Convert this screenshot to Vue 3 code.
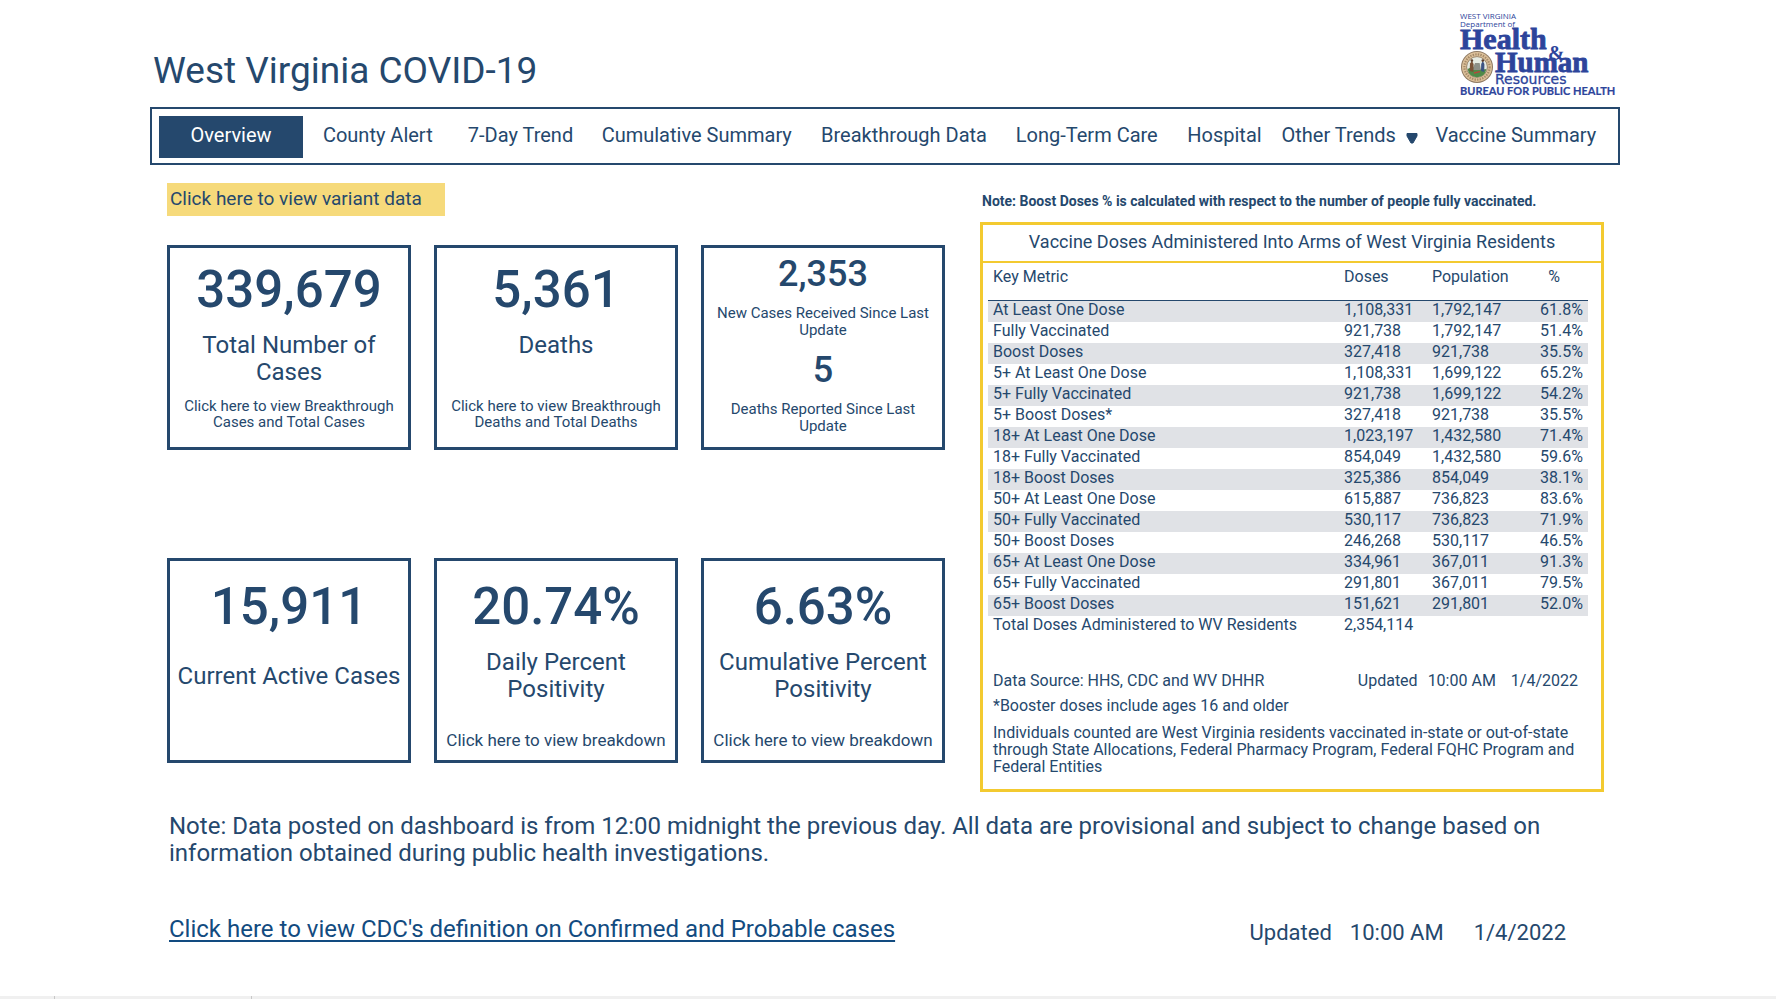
<script setup>
import { ref } from 'vue';

// --- Navigation ---
const activeTab = ref('Overview');
const tabs = [
  { name: 'Overview' },
  { name: 'County Alert' },
  { name: '7-Day Trend' },
  { name: 'Cumulative Summary' },
  { name: 'Breakthrough Data' },
  { name: 'Long-Term Care' },
  { name: 'Hospital' },
  { name: 'Other Trends', menu: true },
  { name: 'Vaccine Summary' },
];

// --- Figures ---
const caseCards = [
  { value: '339,679', label: 'Total Number of Cases', link: 'Click here to view Breakthrough Cases and Total Cases' },
  { value: '5,361', label: 'Deaths', link: 'Click here to view Breakthrough Deaths and Total Deaths' },
];

const updateStats = [
  { value: '2,353', label: 'New Cases Received Since Last Update' },
  { value: '5', label: 'Deaths Reported Since Last Update' },
];

const rateCards = [
  { value: '15,911', label: 'Current Active Cases' },
  { value: '20.74%', label: 'Daily Percent Positivity', link: 'Click here to view breakdown' },
  { value: '6.63%', label: 'Cumulative Percent Positivity', link: 'Click here to view breakdown' },
];

const vaccineRows = [
  ['At Least One Dose', '1,108,331', '1,792,147', '61.8%'],
  ['Fully Vaccinated', '921,738', '1,792,147', '51.4%'],
  ['Boost Doses', '327,418', '921,738', '35.5%'],
  ['5+ At Least One Dose', '1,108,331', '1,699,122', '65.2%'],
  ['5+ Fully Vaccinated', '921,738', '1,699,122', '54.2%'],
  ['5+ Boost Doses*', '327,418', '921,738', '35.5%'],
  ['18+ At Least One Dose', '1,023,197', '1,432,580', '71.4%'],
  ['18+ Fully Vaccinated', '854,049', '1,432,580', '59.6%'],
  ['18+ Boost Doses', '325,386', '854,049', '38.1%'],
  ['50+ At Least One Dose', '615,887', '736,823', '83.6%'],
  ['50+ Fully Vaccinated', '530,117', '736,823', '71.9%'],
  ['50+ Boost Doses', '246,268', '530,117', '46.5%'],
  ['65+ At Least One Dose', '334,961', '367,011', '91.3%'],
  ['65+ Fully Vaccinated', '291,801', '367,011', '79.5%'],
  ['65+ Boost Doses', '151,621', '291,801', '52.0%'],
  ['Total Doses Administered to WV Residents', '2,354,114', '', ''],
];
</script>

<template>
  <div class="dashboard">
    <header class="page-header">
      <h1 class="page-title">West Virginia COVID-19</h1>
      <svg class="logo" viewBox="0 0 158 88" role="img" aria-label="West Virginia Department of Health and Human Resources">
        <g fill="#2d449b">
          <text x="2" y="8" class="logo-small">WEST VIRGINIA</text>
          <text x="2" y="16" class="logo-small">Department of</text>
          <text x="2" y="38" class="logo-serif health">Health</text>
          <text x="90" y="49" class="logo-amp">&amp;</text>
          <text x="37" y="61" class="logo-serif">Human</text>
          <text x="37" y="73" class="logo-wide">Resources</text>
          <text x="2" y="84" class="logo-bureau">BUREAU FOR PUBLIC HEALTH</text>
        </g>
        <!-- state seal -->
        <circle cx="19" cy="56" r="16" fill="#8f7a62" />
        <circle cx="19" cy="56" r="15" fill="#dcc09a" />
        <circle cx="19" cy="56" r="12.6" fill="none" stroke="#a58a68" stroke-width="2.2" stroke-dasharray="1.4 1.2" />
        <circle cx="19" cy="56" r="10.4" fill="#e6ebe2" stroke="#8a7458" stroke-width="0.8" />
        <path d="M9.6 58 Q14 55 19 57 T28.4 58 Q27 66 19 66.2 Q11 66 9.6 58Z" fill="#4f8a48" />
        <path d="M15.4 56 L17 52 L21.6 52 L23 59 L15 59Z" fill="#8d8f86" />
        <path d="M11.6 60 L12 52.5 L14 50 L15.6 53 L15.4 61Z" fill="#7a5236" />
        <path d="M23 60 L23.2 53 L24.8 50 L26.4 53 L26.2 61Z" fill="#3d5482" />
        <circle cx="13.9" cy="49.6" r="1.3" fill="#5b3d2b" />
        <circle cx="24.8" cy="49.6" r="1.3" fill="#5b3d2b" />
        <path d="M16 62 L22 60.6" stroke="#b5493a" stroke-width="1.4" />
      </svg>
    </header>

    <nav class="tabs">
      <button
        v-for="tab in tabs"
        :key="tab.name"
        type="button"
        class="tab"
        :class="{ active: tab.name === activeTab }"
        @click="activeTab = tab.name"
      >
        {{ tab.name }}
        <svg v-if="tab.menu" class="caret" viewBox="0 0 12 12" aria-hidden="true">
          <path d="M1 1.5 H11 V4 L7 11 H5 L1 4Z" fill="currentColor" stroke="currentColor" stroke-linejoin="round" />
        </svg>
      </button>
    </nav>

    <main class="content">
      <section class="figures">
        <a class="variant-link" href="#">Click here to view variant data</a>

        <div class="card-grid">
          <article v-for="card in caseCards" :key="card.label" class="card case-card">
            <p class="card-value">{{ card.value }}</p>
            <h2 class="card-label">{{ card.label }}</h2>
            <a class="card-link" href="#">{{ card.link }}</a>
          </article>

          <article class="card update-card">
            <div v-for="stat in updateStats" :key="stat.label" class="update-stat">
              <p class="update-value">{{ stat.value }}</p>
              <h2 class="update-label">{{ stat.label }}</h2>
            </div>
          </article>

          <article v-for="card in rateCards" :key="card.label" class="card rate-card">
            <p class="card-value">{{ card.value }}</p>
            <h2 class="card-label"><span>{{ card.label }}</span></h2>
            <a v-if="card.link" class="card-link" href="#">{{ card.link }}</a>
          </article>
        </div>
      </section>

      <section class="vaccines">
        <p class="boost-note">Note: Boost Doses % is calculated with respect to the number of people fully vaccinated.</p>

        <div class="panel">
          <h2 class="panel-title">Vaccine Doses Administered Into Arms of West Virginia Residents</h2>

          <table class="vaccine-table">
            <thead>
              <tr>
                <th class="col-metric">Key Metric</th>
                <th class="col-doses">Doses</th>
                <th class="col-population">Population</th>
                <th class="col-percent">%</th>
              </tr>
            </thead>
            <tbody>
              <tr v-for="row in vaccineRows" :key="row[0]">
                <td v-for="(cell, i) in row" :key="i">{{ cell }}</td>
              </tr>
            </tbody>
          </table>

          <div class="panel-source">
            <span class="source">Data Source: HHS, CDC and WV DHHR</span>
            <span>Updated</span>
            <span>10:00 AM</span>
            <span class="source-date">1/4/2022</span>
          </div>
          <p class="panel-note">*Booster doses include ages 16 and older</p>
          <p class="panel-note">
            Individuals counted are West Virginia residents vaccinated in-state or out-of-state through State
            Allocations, Federal Pharmacy Program, Federal FQHC Program and Federal Entities
          </p>
        </div>
      </section>
    </main>

    <footer class="page-footer">
      <p class="data-note">
        Note: Data posted on dashboard is from 12:00 midnight the previous day. All data are provisional and subject to
        change based on information obtained during public health investigations.
      </p>
      <div class="footer-row">
        <a class="cdc-link" href="#">Click here to view CDC's definition on Confirmed and Probable cases</a>
        <div class="updated">
          <span>Updated</span>
          <span>10:00 AM</span>
          <span class="updated-date">1/4/2022</span>
        </div>
      </div>
    </footer>

    <div class="bottom-strip">
      <span class="strip-first"></span>
      <span class="strip-second"></span>
    </div>
  </div>
</template>

<style>
body {
  margin: 0;
  background: #fff;
}
</style>

<style scoped>
.dashboard {
  min-height: 100vh;
  box-sizing: border-box;
  display: flex;
  flex-direction: column;
  color: #25486d;
  font-family: Roboto, 'Liberation Sans', sans-serif;
}

h1, h2, p { margin: 0; font-weight: 400; }
a { color: inherit; text-decoration: none; }

/* Header */
.page-header {
  display: flex;
  justify-content: space-between;
  align-items: flex-start;
  padding: 11px 160px 0 153px;
  height: 96px;
}

.page-title {
  padding-top: 36px;
  font-size: 37px;
  line-height: 48px;
}

.logo { width: 158px; height: 88px; overflow: visible; }
.logo-small { font: 8px 'Open Sans', sans-serif; }
.logo-serif { font: bold 29px 'Liberation Serif', serif; stroke: #2d449b; stroke-width: 0.8px; }
.logo-serif.health { font-size: 30px; }
.logo-amp { font: bold 20px 'Liberation Serif', serif; }
.logo-wide { font: 14px 'DejaVu Sans', sans-serif; stroke: #2d449b; stroke-width: 0.3px; }
.logo-bureau { font: bold 11px Lato, sans-serif; stroke: #2d449b; stroke-width: 0.2px; }

/* Tabs */
.tabs {
  display: grid;
  grid-template-columns: 144fr 149fr 136fr 216fr 198fr 167fr 108fr 142fr 190fr;
  margin: 0 156px 0 150px;
  padding: 7px 7px 5px;
  border: 2px solid #25486d;
}

.tab {
  display: flex;
  align-items: center;
  justify-content: center;
  gap: 10px;
  height: 42px;
  padding: 0 0 4px;
  border: 0;
  background: none;
  color: inherit;
  font: 20px Roboto, 'Liberation Sans', sans-serif;
  white-space: nowrap;
  cursor: pointer;
}

.tab.active { background: #25486d; color: #fff; }
.caret { width: 12px; height: 12px; margin-top: 6px; }

/* Content */
.content {
  display: grid;
  grid-template-columns: 778fr 624fr;
  column-gap: 35px;
  padding: 18px 172px 0 167px;
}

.variant-link {
  display: block;
  box-sizing: border-box;
  width: 278px;
  height: 33px;
  padding-left: 3px;
  background: #f6da7b;
  font-size: 19px;
  line-height: 31px;
}

.card-grid {
  display: grid;
  grid-template-columns: repeat(3, 1fr);
  column-gap: 23px;
  row-gap: 108px;
  margin-top: 29px;
}

.card {
  box-sizing: border-box;
  min-height: 205px;
  border: 3px solid #25486d;
  text-align: center;
}

.case-card { padding: 16px 12px 0; }
.rate-card { padding: 20px 6px 0; }

.card-value {
  font-size: 51px;
  font-weight: 500;
  line-height: 52px;
}

.card-label {
  min-height: 54px;
  margin-top: 16px;
  font-size: 24px;
  line-height: 27px;
}

.case-card .card-link {
  display: block;
  margin-top: 12px;
  font-size: 15px;
  line-height: 16px;
}

.rate-card .card-label {
  display: flex;
  align-items: center;
  justify-content: center;
}

.rate-card .card-link {
  display: block;
  margin-top: 28px;
  font-size: 17px;
  line-height: 18px;
}

.update-card { padding: 6px 8px 0; }
.update-stat + .update-stat { margin-top: 11px; }

.update-value {
  font-size: 36px;
  font-weight: 500;
  line-height: 40px;
}

.update-label {
  margin-top: 11px;
  font-size: 15px;
  line-height: 17px;
}

/* Vaccine panel */
.boost-note {
  padding: 8px 0 0 2px;
  font-size: 14px;
  font-weight: 700;
  line-height: 20px;
}

.panel {
  box-sizing: border-box;
  min-height: 570px;
  margin-top: 11px;
  border: 3px solid #f3ca30;
}

.panel-title {
  padding-bottom: 2px;
  border-bottom: 2px solid #f3ca30;
  font-size: 18px;
  line-height: 34px;
  text-align: center;
}

.vaccine-table {
  width: calc(100% - 18px);
  margin: 0 13px 0 5px;
  border-collapse: collapse;
  table-layout: fixed;
  font-size: 16px;
}

.vaccine-table th {
  height: 37px;
  padding: 4px 5px 0;
  box-sizing: border-box;
  border-bottom: 1px solid #25486d;
  font-weight: 400;
  line-height: 20px;
  text-align: left;
  vertical-align: top;
}

.col-doses { width: 88px; }
.col-population { width: 94px; }
.col-percent { width: 67px; }
.vaccine-table .col-percent { padding-right: 28px; text-align: right; }

.vaccine-table td { padding: 0 5px; height: 21px; line-height: 18px; vertical-align: top; }
.vaccine-table td:last-child { text-align: right; }
.vaccine-table tbody tr:nth-child(odd):not(:last-child) { background: #e0e2e6; }

.panel-source {
  display: flex;
  gap: 10px;
  margin: 34px 23px 0 10px;
  font-size: 16px;
  line-height: 20px;
}

.source { flex: 1; }
.source-date { padding-left: 5px; }

.panel-note {
  margin: 6px 14px 0 10px;
  font-size: 16px;
  line-height: 17px;
}

.panel-note + .panel-note { margin-top: 10px; }

/* Footer */
.page-footer { padding: 21px 172px 0 169px; }

.data-note {
  max-width: 1390px;
  font-size: 24px;
  line-height: 27px;
}

.footer-row {
  display: flex;
  justify-content: space-between;
  align-items: flex-start;
  margin-top: 46px;
  line-height: 32px;
}

.cdc-link {
  color: #124b80;
  font-size: 24px;
  text-decoration: underline;
  text-decoration-thickness: 2px;
  text-underline-offset: 3px;
}

.updated {
  display: flex;
  gap: 18px;
  padding: 4px 38px 0 0;
  font-size: 22px;
}

.updated-date { padding-left: 12px; }

.bottom-strip {
  display: flex;
  height: 3px;
  margin-top: auto;
  background: #f0f0f0;
}

.bottom-strip span { border-right: 1px solid #c8c8c8; }
.strip-first { width: 54px; }
.strip-second { width: 196px; }
</style>
